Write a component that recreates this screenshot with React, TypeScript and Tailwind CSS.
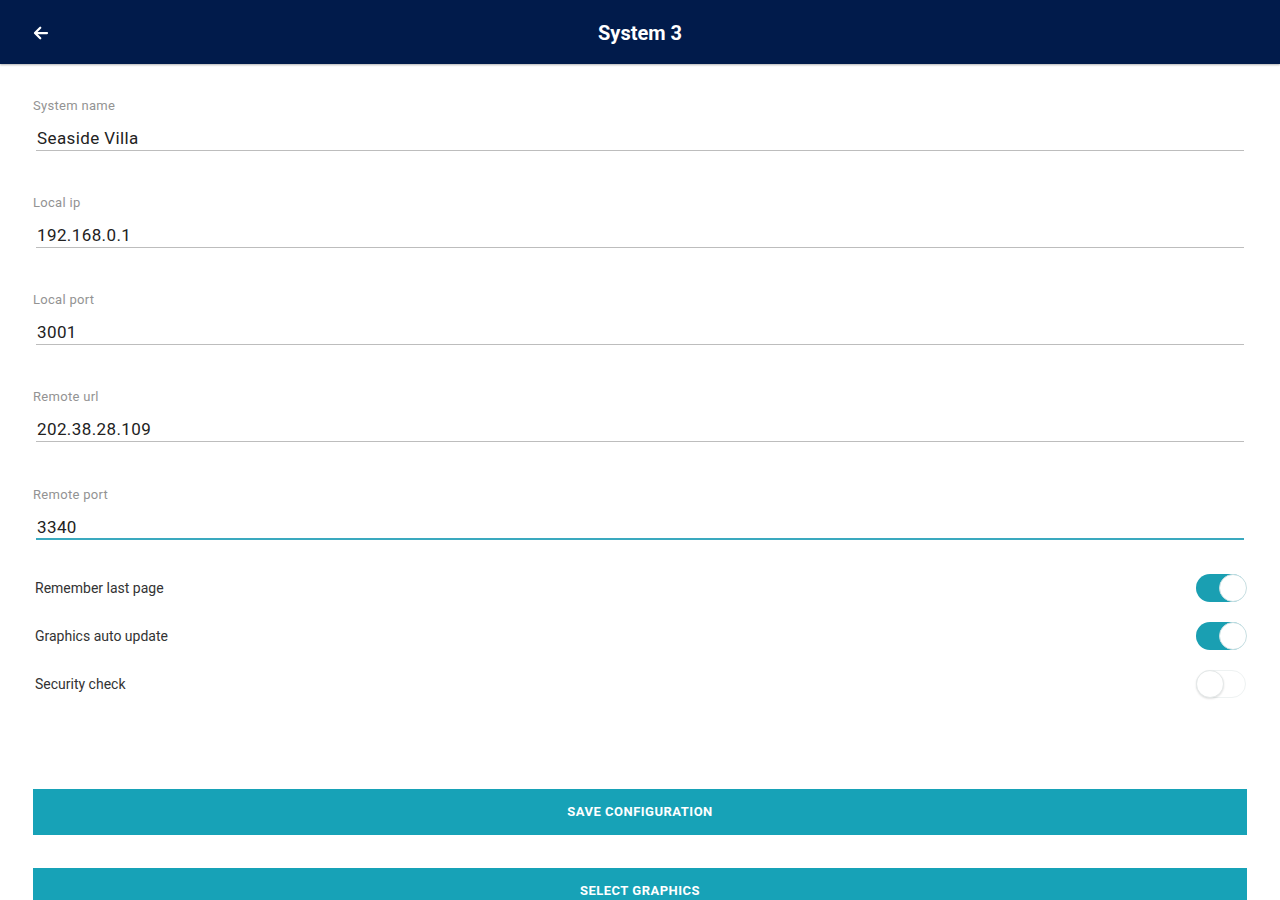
import { useState } from 'react';

type Field = { label: string; value: string; focused?: boolean };

const fields: Field[] = [
  { label: 'System name', value: 'Seaside Villa' },
  { label: 'Local ip', value: '192.168.0.1' },
  { label: 'Local port', value: '3001' },
  { label: 'Remote url', value: '202.38.28.109' },
  { label: 'Remote port', value: '3340', focused: true },
];

function Toggle({ on, onClick }: { on: boolean; onClick: () => void }) {
  return (
    <button
      type="button"
      onClick={onClick}
      className={`relative h-[28px] w-[50px] rounded-full ${
        on ? 'bg-[#1a9fb2]' : 'border border-[#eef2f2] bg-white'
      }`}
    >
      <span
        className={`absolute top-1/2 h-[28px] w-[28px] -translate-y-1/2 rounded-full border bg-white ${
          on ? 'right-[-1px] border-[#c9dfe2]' : 'left-[-1px] border-[#e4e8e8] shadow-[0_1px_2px_rgba(0,0,0,0.12)]'
        }`}
      />
    </button>
  );
}

export default function App() {
  const [toggles, setToggles] = useState([
    { label: 'Remember last page', on: true },
    { label: 'Graphics auto update', on: true },
    { label: 'Security check', on: false },
  ]);

  const flip = (index: number) =>
    setToggles((prev) => prev.map((t, i) => (i === index ? { ...t, on: !t.on } : t)));

  return (
    <div className="min-h-[900px] bg-white font-['Roboto',sans-serif]">
      <header className="relative flex h-[64px] items-center justify-center bg-[#011b4b] shadow-[0_1px_2px_rgba(0,0,0,0.3)]">
        <button type="button" className="absolute left-[32px] top-[24px] text-white">
          <svg width="18" height="18" viewBox="0 0 24 24" fill="none" stroke="currentColor" strokeWidth="3" strokeLinecap="round" strokeLinejoin="round">
            <path d="M20 12H5" />
            <path d="M11 5l-7 7 7 7" />
          </svg>
        </button>
        <h1 className="pt-[2px] text-[20px] font-bold text-white">System 3</h1>
      </header>

      <main className="px-[33px] pt-[34px]">
        <div className="flex flex-col gap-[44px]">
          {fields.map((field) => (
            <div key={field.label} className={field.focused ? 'mt-[1px]' : ''}>
              <div className="h-[16px] text-[13px] leading-[16px] tracking-[0.3px] text-[#939393]">{field.label}</div>
              <div
                className={`ml-[3px] mr-[3px] mt-[12px] h-[25px] pl-[1px] text-[17px] leading-[24px] tracking-[0.4px] text-[#222] ${
                  field.focused ? 'border-b-2 border-[#3aa9bf]' : 'border-b border-[#bdbdbd]'
                }`}
              >
                {field.value}
              </div>
            </div>
          ))}
        </div>

        <div className="mt-[24px] flex flex-col">
          {toggles.map((t, i) => (
            <div key={t.label} className="flex h-[48px] items-center justify-between pl-[2px] pr-[1px]">
              <span className="text-[14px] text-[#333]">{t.label}</span>
              <Toggle on={t.on} onClick={() => flip(i)} />
            </div>
          ))}
        </div>

        <div className="mt-[81px] flex flex-col gap-[33px] pb-[20px]">
          <button type="button" className="h-[46px] w-full bg-[#17a2b7] text-[13px] font-bold uppercase tracking-[0.5px] text-white">
            Save configuration
          </button>
          <button type="button" className="h-[46px] w-full bg-[#17a2b7] text-[13px] font-bold uppercase tracking-[0.5px] text-white">
            Select graphics
          </button>
        </div>
      </main>
    </div>
  );
}
